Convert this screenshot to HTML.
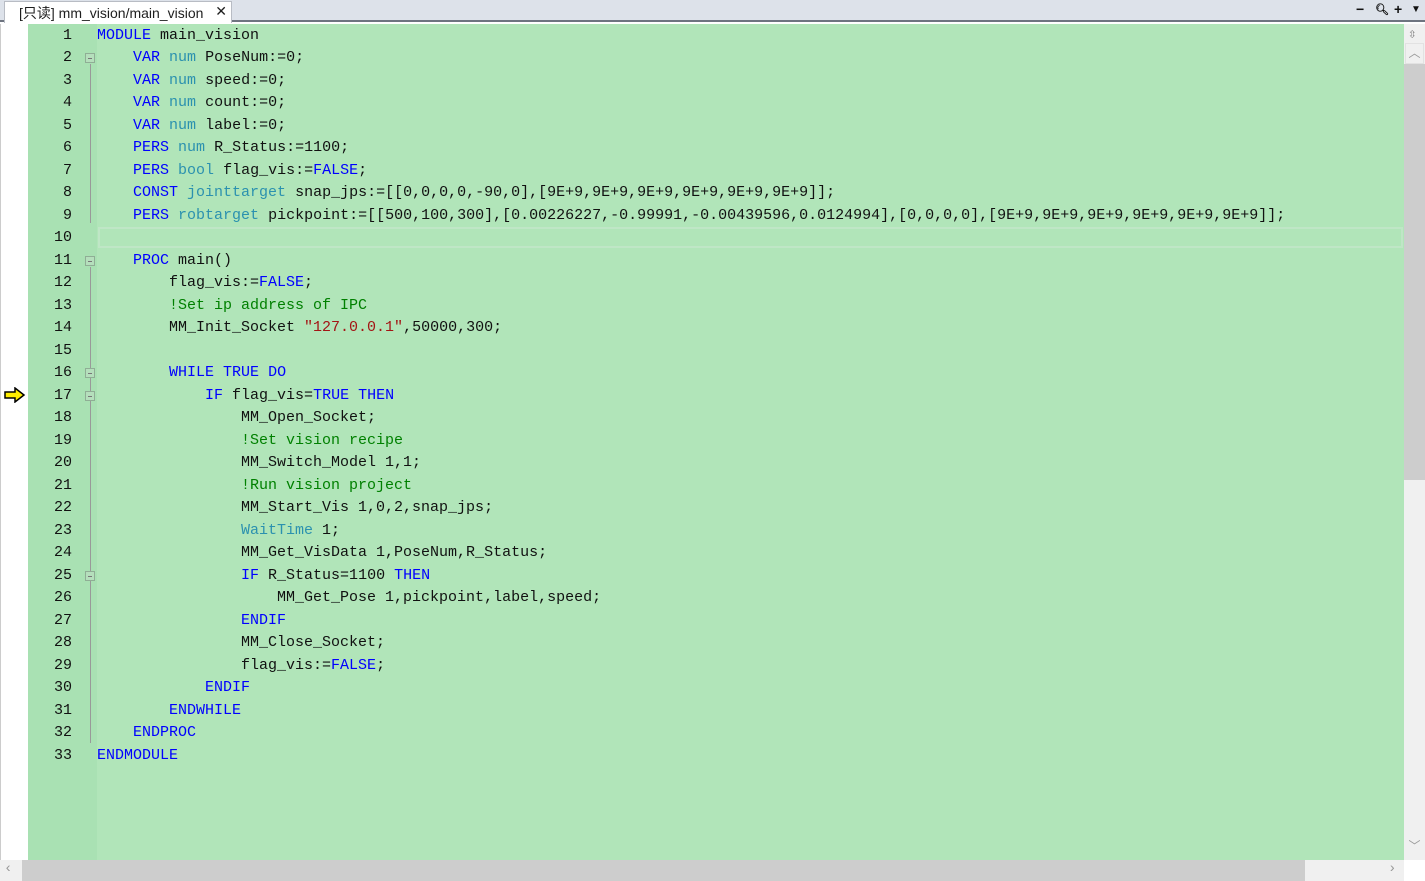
<!DOCTYPE html><html><head><meta charset="utf-8"><style>
*{margin:0;padding:0;box-sizing:border-box}
body{width:1425px;height:881px;overflow:hidden;background:#fff;font-family:"Liberation Mono",monospace;position:relative}
#tabbar{position:absolute;left:0;top:0;width:1425px;height:22px;background:#dde2ea;border-bottom:2px solid #6e7480}
#tab{position:absolute;left:4px;top:1px;width:228px;height:22px;background:#fff;border:1px solid #b8bcc4;border-bottom:none;font:14px "Liberation Sans","Noto Sans CJK SC",sans-serif;color:#1e1e1e;padding:1px 0 0 14px}
#tab b{position:absolute;right:4px;top:1px;font-weight:normal;font-size:14px}
.tb{position:absolute;top:1px;font:bold 14px "Liberation Sans",sans-serif;color:#111}
#lm{position:absolute;left:0;top:24px;width:28px;height:836px;background:#fff;border-left:1px solid #ccc}
#gut{position:absolute;left:28px;top:24px;width:69px;height:836px;background:#a9e1b3}
#ed{position:absolute;left:97px;top:24px;width:1307px;height:836px;background:#b1e5b9}
.ln{position:absolute;left:28px;width:44px;text-align:right;font-size:15px;color:#111;height:22px;line-height:22px}
.cd{position:absolute;left:97px;font-size:15px;color:#111;white-space:pre;height:22px;line-height:22px}
.k{color:#0000ff}.t{color:#2b91af}.c{color:#008000}.s{color:#a31515}
.fb{position:absolute;left:85px;width:10px;height:10px;border:1px solid #8fae95;background:#b5dfbc}
.fb:after{content:"";position:absolute;left:2px;top:4px;width:4px;height:1px;background:#777}
.vl{position:absolute;left:90px;width:1px;background:#999}
#vs{position:absolute;left:1404px;top:24px;width:21px;height:836px;background:#f0f0f0}
#hs{position:absolute;left:0;top:860px;width:1404px;height:21px;background:#f0f0f0}
</style></head><body>
<div id="tabbar"><div id="tab">[只读] mm_vision/main_vision<b>✕</b></div>
<span class="tb" style="left:1356px">−</span><span class="tb" style="left:1375px;font-size:11px;top:3px">🔍︎</span><span class="tb" style="left:1394px">+</span><span class="tb" style="left:1411px;font-size:10px;top:4px">▼</span></div>
<div id="lm"></div><div id="gut"></div><div id="ed"></div>
<div style="position:absolute;left:98px;top:227px;width:1305px;height:21px;border:2px solid #bfe6c6"></div>
<div id="vs"><div style="position:absolute;left:4px;top:2px;font-size:14px;color:#777">⇳</div><div style="position:absolute;left:1px;top:19px;width:19px;height:21px;border:1px solid #e2e2e2;color:#999;font-size:12px;text-align:center;line-height:21px">︿</div><div style="position:absolute;left:0;top:40px;width:21px;height:416px;background:#cdcdcd"></div><div style="position:absolute;left:1px;top:812px;width:19px;height:22px;color:#999;font-size:12px;text-align:center;line-height:22px">﹀</div></div>
<div id="hs"><div style="position:absolute;left:4px;top:1px;color:#999;font-size:14px">‹</div><div style="position:absolute;left:22px;top:0;width:1283px;height:21px;background:#cdcdcd"></div><div style="position:absolute;left:1388px;top:1px;color:#999;font-size:14px">›</div></div>
<div style="position:absolute;left:1404px;top:860px;width:21px;height:21px;background:#fff"></div>
<svg style="position:absolute;left:4px;top:387px" width="22" height="16"><path d="M1 5h10V1l9 7-9 7v-4H1z" fill="#ffee00" stroke="#000" stroke-width="1.5"/></svg>
<div class="vl" style="top:64px;height:159px"></div><div class="vl" style="top:267px;height:476px"></div>
<div id="L"></div>
<script>
var lines=[
'<span class="k">MODULE</span> main_vision',
'    <span class="k">VAR</span> <span class="t">num</span> PoseNum:=0;',
'    <span class="k">VAR</span> <span class="t">num</span> speed:=0;',
'    <span class="k">VAR</span> <span class="t">num</span> count:=0;',
'    <span class="k">VAR</span> <span class="t">num</span> label:=0;',
'    <span class="k">PERS</span> <span class="t">num</span> R_Status:=1100;',
'    <span class="k">PERS</span> <span class="t">bool</span> flag_vis:=<span class="k">FALSE</span>;',
'    <span class="k">CONST</span> <span class="t">jointtarget</span> snap_jps:=[[0,0,0,0,-90,0],[9E+9,9E+9,9E+9,9E+9,9E+9,9E+9]];',
'    <span class="k">PERS</span> <span class="t">robtarget</span> pickpoint:=[[500,100,300],[0.00226227,-0.99991,-0.00439596,0.0124994],[0,0,0,0],[9E+9,9E+9,9E+9,9E+9,9E+9,9E+9]];',
'',
'    <span class="k">PROC</span> main()',
'        flag_vis:=<span class="k">FALSE</span>;',
'        <span class="c">!Set ip address of IPC</span>',
'        MM_Init_Socket <span class="s">"127.0.0.1"</span>,50000,300;',
'',
'        <span class="k">WHILE</span> <span class="k">TRUE</span> <span class="k">DO</span>',
'            <span class="k">IF</span> flag_vis=<span class="k">TRUE</span> <span class="k">THEN</span>',
'                MM_Open_Socket;',
'                <span class="c">!Set vision recipe</span>',
'                MM_Switch_Model 1,1;',
'                <span class="c">!Run vision project</span>',
'                MM_Start_Vis 1,0,2,snap_jps;',
'                <span class="t">WaitTime</span> 1;',
'                MM_Get_VisData 1,PoseNum,R_Status;',
'                <span class="k">IF</span> R_Status=1100 <span class="k">THEN</span>',
'                    MM_Get_Pose 1,pickpoint,label,speed;',
'                <span class="k">ENDIF</span>',
'                MM_Close_Socket;',
'                flag_vis:=<span class="k">FALSE</span>;',
'            <span class="k">ENDIF</span>',
'        <span class="k">ENDWHILE</span>',
'    <span class="k">ENDPROC</span>',
'<span class="k">ENDMODULE</span>'];
var h='',folds=[2,11,16,17,25];
lines.forEach(function(l,i){var y=24.5+i*22.5;
h+='<div class="ln" style="top:'+y+'px">'+(i+1)+'</div><div class="cd" style="top:'+y+'px">'+l+'</div>';
if(folds.indexOf(i+1)>=0)h+='<div class="fb" style="top:'+(y+6)+'px"></div>';});
document.getElementById('L').outerHTML=h;
</script>
</body></html>
